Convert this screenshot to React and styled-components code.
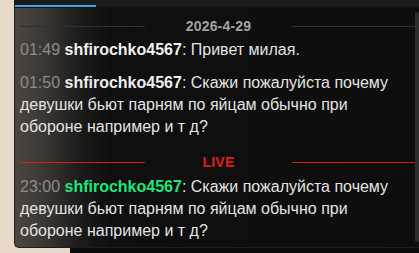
import styled, { createGlobalStyle } from "styled-components";

const GlobalStyle = createGlobalStyle`
  html, body {
    margin: 0;
    padding: 0;
    background: #e7d8c9;
    overflow: hidden;
  }
  body {
    font-family: "Liberation Sans", Arial, sans-serif;
  }
`;

const messages = [
  { time: "01:49", user: "shfirochko4567", text: "Привет милая." },
  {
    time: "01:50",
    user: "shfirochko4567",
    text: "Скажи пожалуйста почему девушки бьют парням по яйцам обычно при обороне например и т д?",
  },
];

const liveMessages = [
  {
    time: "23:00",
    user: "shfirochko4567",
    text: "Скажи пожалуйста почему девушки бьют парням по яйцам обычно при обороне например и т д?",
    live: true,
  },
];

const App = () => {
  return (
    <>
      <GlobalStyle />
      <Page>
        <Panel>
          <TopBar>
            <TabLine />
          </TopBar>
          <Feed>
            <Divider>
              <span>2026-4-29</span>
            </Divider>
            {messages.map((m, i) => (
              <Message key={i}>
                <Time>{m.time}</Time> <Name>{m.user}</Name>: {m.text}
              </Message>
            ))}
            <Divider $live>
              <span>LIVE</span>
            </Divider>
            {liveMessages.map((m, i) => (
              <Message key={i}>
                <Time>{m.time}</Time> <Name $live={m.live}>{m.user}</Name>: {m.text}
              </Message>
            ))}
          </Feed>
          <Scrollbar />
        </Panel>
        <Bottom />
      </Page>
    </>
  );
};

const Page = styled.div`
  width: 419px;
  height: 253px;
  position: relative;
`;

const Panel = styled.div`
  position: relative;
  margin-left: 14px;
  width: 405px;
  height: 248px;
  box-sizing: border-box;
  border-left: 1px solid #1e1e1e;
  border-bottom: 1px solid #1e1e1e;
  border-bottom-left-radius: 5px;
  overflow: hidden;
  background: linear-gradient(
    to right,
    #4b4641 0px,
    #3a3633 30px,
    #1c1b1a 65px,
    #0f0f0f 95px,
    #0e0e0e 100%
  );
`;

const TopBar = styled.div`
  height: 7px;
  background: #1b1b1b;
  position: relative;
  border-bottom: 1px solid #141414;
`;

const TabLine = styled.div`
  position: absolute;
  left: 0;
  bottom: 0;
  width: 81px;
  height: 2px;
  background: #3ea6e8;
`;

const Feed = styled.div`
  padding: 8px 0 0 5px;
  display: flex;
  flex-direction: column;
`;

const Divider = styled.div`
  display: flex;
  align-items: center;
  height: 20px;
  margin-bottom: ${(p) => (p.$live ? "4px" : "3px")};
  margin-top: ${(p) => (p.$live ? "3px" : "0")};
  &::before,
  &::after {
    content: "";
    height: 1px;
    background: ${(p) => (p.$live ? "#e0191c" : "#2f2f2f")};
  }
  &::before {
    width: 125px;
  }
  &::after {
    flex: 1;
  }
  & > span {
    width: 147px;
    text-align: center;
    font-size: 14px;
    font-weight: 700;
    color: ${(p) => (p.$live ? "#e8191c" : "#a3a3a3")};
    letter-spacing: 0.2px;
  }
`;

const Message = styled.div`
  font-size: 16px;
  line-height: 22px;
  color: #e4e4e4;
  padding-right: 14px;
  margin-bottom: 11px;
`;

const Time = styled.span`
  color: #8c8c8c;
`;

const Name = styled.span`
  font-weight: 700;
  color: ${(p) => (p.$live ? "#1ee67c" : "#efefef")};
`;

const Scrollbar = styled.div`
  position: absolute;
  right: 0;
  top: 12px;
  width: 4px;
  height: 230px;
  background: #2e2e2e;
  border-radius: 2px;
`;

const Bottom = styled.div`
  height: 5px;
  margin-left: 70px;
  background: #0c0c0c;
`;

export default App;
